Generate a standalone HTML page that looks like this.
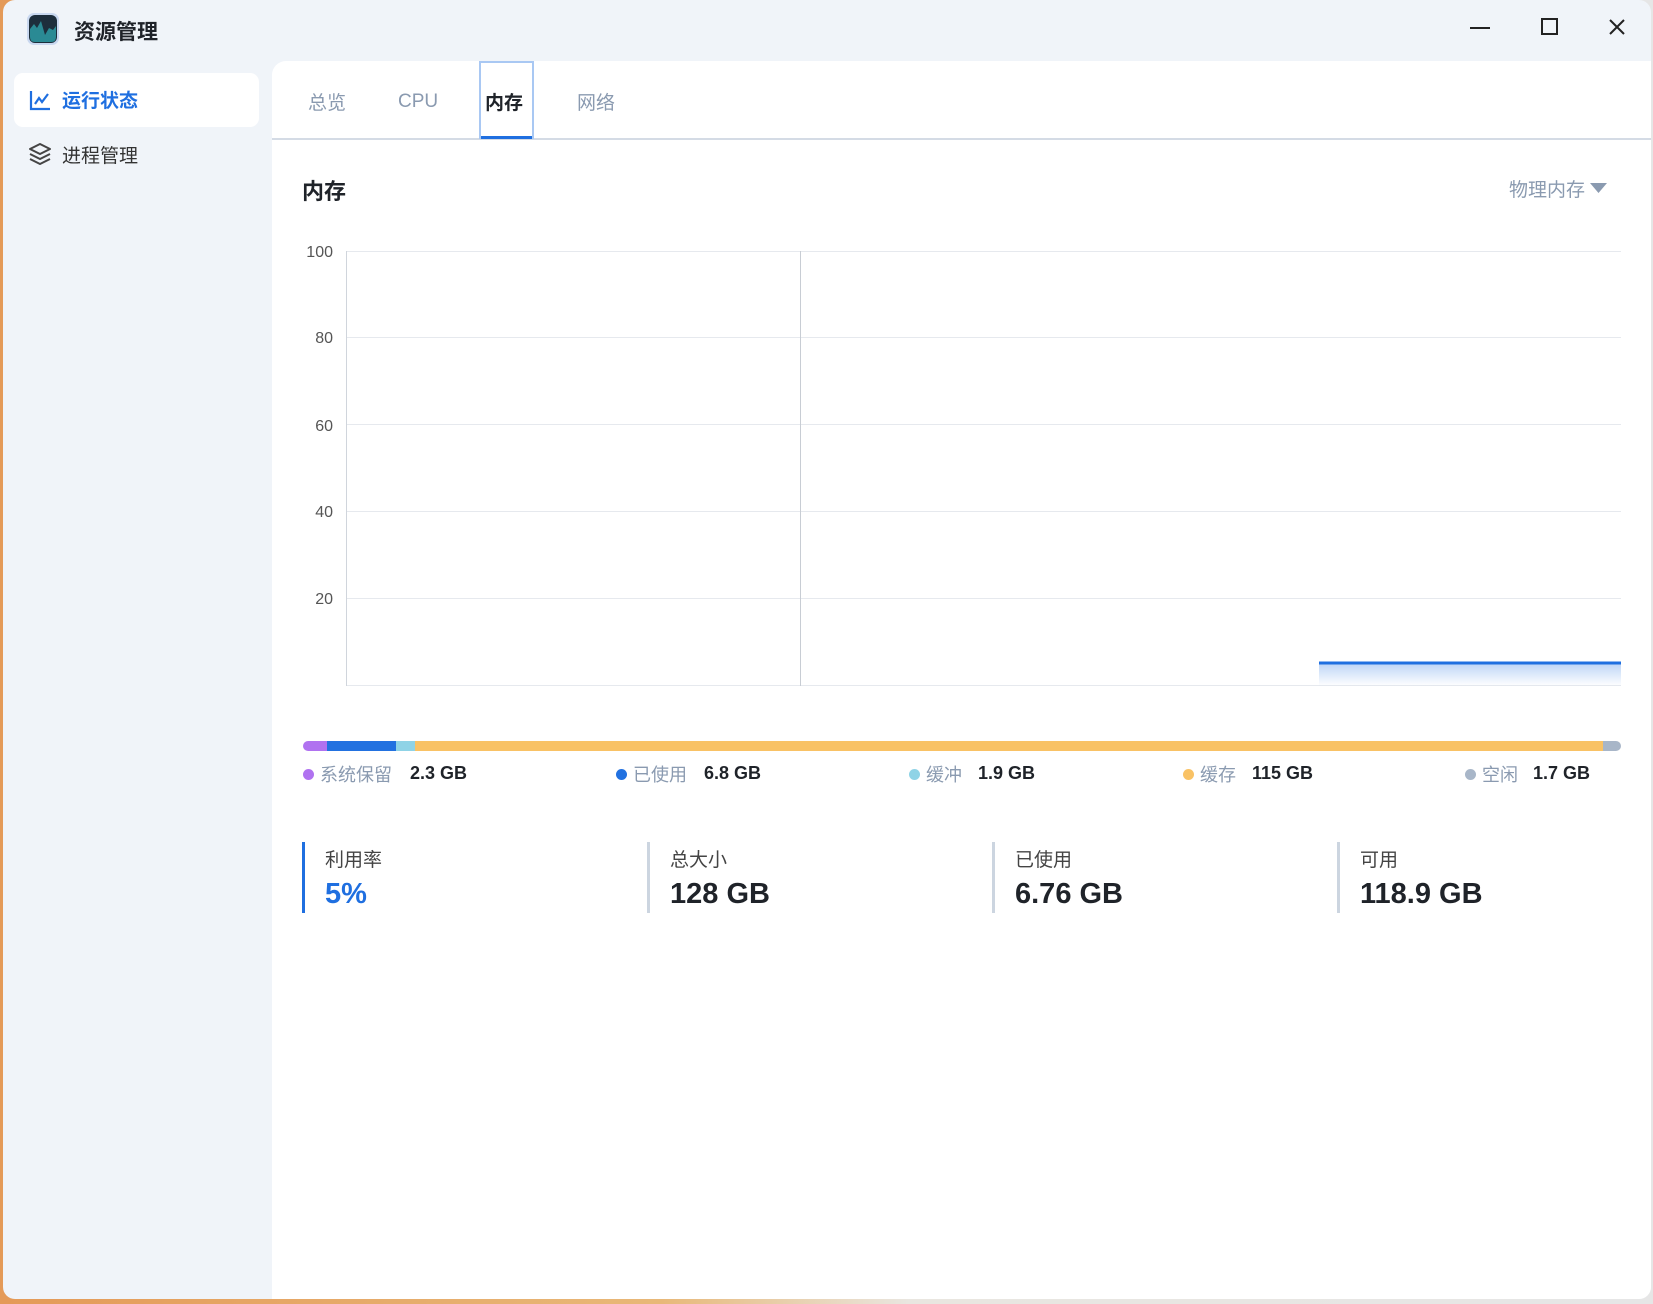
<!DOCTYPE html>
<html><head><meta charset="utf-8"><style>
*{margin:0;padding:0;box-sizing:border-box}
html,body{width:1653px;height:1304px;overflow:hidden}
body{background:linear-gradient(90deg,#e49a58,#e8b878 40%,#e9e6e0 55%,#e6e6e6);font-family:"Liberation Sans","Noto Sans CJK SC",sans-serif;position:relative}
.win{position:absolute;left:3px;top:0;width:1648px;height:1299px;background:#f0f4f9;border-radius:12px;overflow:hidden}
.abs{position:absolute;white-space:nowrap}
.main{position:absolute;left:269px;top:61px;right:0;bottom:0;background:#fff;border-top-left-radius:14px}
.lbl{color:#1f2329}
.dot{display:inline-block;width:11px;height:11px;border-radius:50%;margin-right:6px;vertical-align:1px}
.lg{color:#8a9ab0}
.sh{position:absolute;left:-3px;top:0;width:100%;height:100%}
</style></head><body>
<div class="win">
  <div class="abs" style="left:24px;top:13px;width:32px;height:32px;border-radius:7px;background:#c9d8f0;padding:2px">
    <svg width="28" height="28" viewBox="0 0 28 28"><rect x="0" y="0" width="28" height="28" rx="6" fill="#1d2e3c"/><path d="M1 14 L5 9 L8 13 L12 6 L16 20 L20 13 L24 15 L27 11 L27 22 Q27 27 22 27 L6 27 Q1 27 1 22Z" fill="#2a8a94"/></svg>
  </div>
  <div class="abs" style="left:71px;top:16px;font-size:21px;font-weight:bold;color:#1f2329">资源管理</div>
  <svg class="abs" style="left:1467px;top:18px" width="20" height="20"><line x1="0" y1="10" x2="20" y2="10" stroke="#222" stroke-width="2"/></svg>
  <svg class="abs" style="left:1538px;top:18px" width="18" height="18"><rect x="1" y="1" width="15" height="15" fill="none" stroke="#222" stroke-width="2"/></svg>
  <svg class="abs" style="left:1606px;top:19px" width="16" height="16"><path d="M1 1L15 15M15 1L1 15" stroke="#222" stroke-width="2"/></svg>
  <div class="abs" style="left:11px;top:73px;width:245px;height:54px;background:#fff;border-radius:9px"></div>
  <svg class="abs" style="left:26px;top:89px" width="22" height="22" viewBox="0 0 22 22"><path d="M2 2V20H21" fill="none" stroke="#1f6fe0" stroke-width="2.2"/><path d="M6 15L10 9L13 13L19 5" fill="none" stroke="#1f6fe0" stroke-width="2.2"/></svg>
  <div class="abs" style="left:59px;top:86px;font-size:19px;font-weight:bold;color:#1f6fe0">运行状态</div>
  <svg class="abs" style="left:25px;top:142px" width="24" height="24" viewBox="0 0 24 24"><path d="M12 2L22 7L12 12L2 7Z" fill="none" stroke="#444" stroke-width="2" stroke-linejoin="round"/><path d="M2 12L12 17L22 12" fill="none" stroke="#444" stroke-width="2" stroke-linejoin="round"/><path d="M2 17L12 22L22 17" fill="none" stroke="#444" stroke-width="2" stroke-linejoin="round"/></svg>
  <div class="abs" style="left:59px;top:141px;font-size:19px;color:#333">进程管理</div>

  <div class="main">
    <div class="abs" style="left:0;top:77px;right:0;height:2px;background:#d4dbe5"></div>
    <div class="abs" style="left:207px;top:0;width:55px;height:78px;border:2px solid #a9c8f3"></div>
    <div class="abs" style="left:209px;top:75px;width:51px;height:3px;background:#1f6fe0"></div>
    <div class="abs" style="left:36px;top:27px;font-size:19px;color:#8a9ab0">总览</div>
    <div class="abs" style="left:126px;top:30px;font-size:19px;color:#8a9ab0">CPU</div>
    <div class="abs" style="left:213px;top:27px;font-size:19px;font-weight:bold;color:#1f2329">内存</div>
    <div class="abs" style="left:305px;top:27px;font-size:19px;color:#8a9ab0">网络</div>
    <div class="sh">
    <div class="abs" style="left:33px;top:113px;font-size:22px;font-weight:bold;color:#1f2329">内存</div>
    <div class="abs" style="left:1240px;top:114px;font-size:19px;color:#8a9ab0">物理内存 <svg width="17" height="10" style="vertical-align:3px"><path d="M0 0H17L8.5 10Z" fill="#8a9ab0"/></svg></div>

    <svg class="abs" style="left:0;top:160px" width="1384" height="480">
      <g font-size="16" fill="#555" text-anchor="end" font-family="Liberation Sans">
        <text x="64" y="36">100</text><text x="64" y="122">80</text><text x="64" y="210">60</text><text x="64" y="296">40</text><text x="64" y="383">20</text>
      </g>
      <g stroke="#e6e9ee" stroke-width="1">
        <line x1="77" y1="30.5" x2="1352" y2="30.5"/><line x1="77" y1="116.5" x2="1352" y2="116.5"/><line x1="77" y1="203.5" x2="1352" y2="203.5"/><line x1="77" y1="290.5" x2="1352" y2="290.5"/><line x1="77" y1="377.5" x2="1352" y2="377.5"/><line x1="77" y1="464.5" x2="1352" y2="464.5"/>
      </g>
      <line x1="77.5" y1="30" x2="77.5" y2="465" stroke="#d0d5dc"/>
      <line x1="531.5" y1="30" x2="531.5" y2="465" stroke="#c8cdd4"/>
      <defs><linearGradient id="g" x1="0" y1="0" x2="0" y2="1"><stop offset="0" stop-color="#1f6fe0" stop-opacity=".3"/><stop offset="1" stop-color="#1f6fe0" stop-opacity="0"/></linearGradient></defs>
      <rect x="1050" y="442" width="302" height="23" fill="url(#g)"/>
      <line x1="1050" y1="442" x2="1352" y2="442" stroke="#1f6fe0" stroke-width="3"/>
    </svg>

    <div class="abs" style="left:34px;top:680px;width:1318px;height:10px;border-radius:5px;overflow:hidden;display:flex">
      <div style="width:24px;background:#b072f0"></div><div style="width:69px;background:#2271e0"></div><div style="width:19px;background:#8fd3e6"></div><div style="width:1188px;background:#f9c265"></div><div style="flex:1;background:#a8b6c8"></div>
    </div>
    <div class="abs" style="top:700px;left:0;font-size:18px;width:1400px;height:30px">
      <span class="abs" style="left:34px;top:0"><span class="dot" style="background:#b072f0"></span><span class="lg">系统保留</span></span><b class="abs lbl" style="left:141px;top:2px">2.3 GB</b>
      <span class="abs" style="left:347px;top:0"><span class="dot" style="background:#2271e0"></span><span class="lg">已使用</span></span><b class="abs lbl" style="left:435px;top:2px">6.8 GB</b>
      <span class="abs" style="left:640px;top:0"><span class="dot" style="background:#8fd3e6"></span><span class="lg">缓冲</span></span><b class="abs lbl" style="left:709px;top:2px">1.9 GB</b>
      <span class="abs" style="left:914px;top:0"><span class="dot" style="background:#f9c265"></span><span class="lg">缓存</span></span><b class="abs lbl" style="left:983px;top:2px">115 GB</b>
      <span class="abs" style="left:1196px;top:0"><span class="dot" style="background:#a8b6c8"></span><span class="lg">空闲</span></span><b class="abs lbl" style="left:1264px;top:2px">1.7 GB</b>
    </div>

    <div class="abs" style="left:33px;top:781px;width:3px;height:71px;background:#1f6fe0"></div>
    <div class="abs" style="left:378px;top:781px;width:3px;height:71px;background:#ccd5e0"></div>
    <div class="abs" style="left:723px;top:781px;width:3px;height:71px;background:#ccd5e0"></div>
    <div class="abs" style="left:1068px;top:781px;width:3px;height:71px;background:#ccd5e0"></div>
    <div class="abs" style="left:56px;top:784px;font-size:19px;color:#444">利用率</div>
    <div class="abs" style="left:56px;top:817px;font-size:29px;font-weight:bold;color:#1f6fe0">5%</div>
    <div class="abs" style="left:401px;top:784px;font-size:19px;color:#444">总大小</div>
    <div class="abs" style="left:401px;top:817px;font-size:29px;font-weight:bold;color:#1f2329">128 GB</div>
    <div class="abs" style="left:746px;top:784px;font-size:19px;color:#444">已使用</div>
    <div class="abs" style="left:746px;top:817px;font-size:29px;font-weight:bold;color:#1f2329">6.76 GB</div>
    <div class="abs" style="left:1091px;top:784px;font-size:19px;color:#444">可用</div>
    <div class="abs" style="left:1091px;top:817px;font-size:29px;font-weight:bold;color:#1f2329">118.9 GB</div>
    </div>
  </div>
</div>
</body></html>
